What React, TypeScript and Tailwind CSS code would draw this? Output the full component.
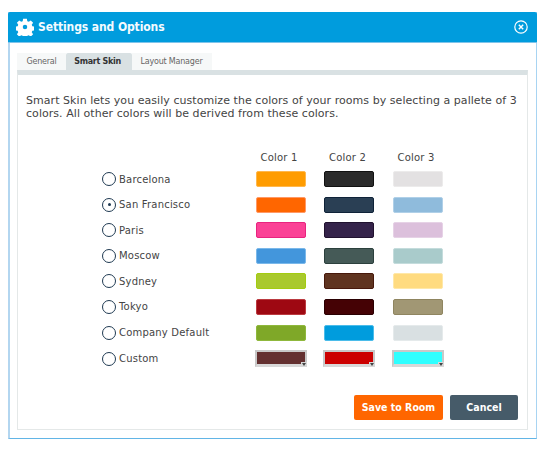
const rows = [
  { name: "Barcelona", colors: [["#ff9c00", "#ffb84d"], ["#2b2b2b", "#111111"], ["#e3e1e2", "#ecebeb"]] },
  { name: "San Francisco", checked: true, colors: [["#ff6600", "#ff9966"], ["#2a3f54", "#0f2238"], ["#8fbbdc", "#b0d0e8"]] },
  { name: "Paris", colors: [["#fb4196", "#e8237f"], ["#35234a", "#21122f"], ["#dcc0dc", "#e6d2e6"]] },
  { name: "Moscow", colors: [["#4396dc", "#7ab8ea"], ["#455a57", "#2c403d"], ["#a9cbcb", "#c4dcdc"]] },
  { name: "Sydney", colors: [["#a9c92d", "#a3cc10"], ["#5f3420", "#47190c"], ["#ffdb80", "#ffe8a8"]] },
  { name: "Tokyo", colors: [["#9e0812", "#bb3a40"], ["#450205", "#2a0002"], ["#a19774", "#8f8560"]] },
  { name: "Company Default", colors: [["#7fa828", "#8fb83c"], ["#009cdd", "#4bbcea"], ["#d9e0e2", "#e5eaeb"]] },
];
const custom = ["#643030", "#cc0000", "#2fffff"];

function Radio({ checked }: { checked?: boolean }) {
  return (
    <span className="flex h-[14px] w-[14px] items-center justify-center rounded-full border-[1.5px] border-[#1f3a52] bg-white">
      {checked && <span className="h-[3px] w-[3px] rounded-full bg-[#1f3a52]" />}
    </span>
  );
}

export default function App() {
  return (
    <div className="h-[450px] w-[545px] bg-white pl-2 pr-2 pt-3 font-['DejaVu_Sans',sans-serif]">
      <div className="flex h-[427px] w-[529px] flex-col border-b border-r border-l-2 border-[#62b5e6] border-l-[#b3d6f0] border-r-[#a8d4f2] bg-white">
        <div className="-ml-[2px] -mr-px flex h-[31px] items-center justify-between rounded-t-[2px] bg-[#009cdd] border-b border-[#7fc4ea] pl-[8px] pr-[9px]">
          <div className="flex items-center gap-[4px]">
            <svg width="18" height="18" viewBox="0 0 24 24" fill="#ffffff">
              <path fillRule="evenodd" d="M9.5 1h5l.6 3.2 1.9.8 2.7-1.8 3.1 3.1-1.8 2.7.8 1.9 3 .6v5l-3 .6-.8 1.9 1.8 2.7-3.1 3.1-2.7-1.8-1.9.8-.6 3h-5l-.6-3-1.9-.8-2.7 1.8-3.1-3.1 1.8-2.7-.8-1.9-3-.6v-5l3-.6.8-1.9-1.8-2.7 3.1-3.1 2.7 1.8 1.9-.8zM12 9a3 3 0 1 0 0 6 3 3 0 0 0 0-6z" />
            </svg>
            <span className="font-['DejaVu_Sans_Condensed','DejaVu_Sans',sans-serif] text-[12px] font-bold tracking-[-0.1px] text-[#f4fbff]">Settings and Options</span>
          </div>
          <svg width="14" height="14" viewBox="0 0 14 14" fill="none" stroke="#ffffff">
            <circle cx="7" cy="7" r="6.2" strokeWidth="1.2" />
            <path d="M4.8 4.8l4.4 4.4M9.2 4.8l-4.4 4.4" strokeWidth="1.4" />
          </svg>
        </div>

        <div className="flex flex-1 flex-col pl-[7px] pr-[8px] pb-2 pt-[10px]">
          <div className="flex h-[17px] items-stretch text-[8px] tracking-[-0.2px] text-[#666666]">
            <div className="flex w-[49px] items-center justify-center bg-[#f6f8f8]">General</div>
            <div className="flex w-[66px] items-center justify-center rounded-t-[2px] bg-[#d9e1e3] pr-[3px] font-bold tracking-[-0.3px] text-[#333333]">Smart Skin</div>
            <div className="flex w-[80px] items-center justify-center bg-[#f6f8f8] pr-[1px]">Layout Manager</div>
          </div>
          <div className="flex flex-1 flex-col border-l border-b border-r border-[#e4e8e8] border-t-[5px] border-t-[#d9e1e3] pl-[8px] pr-[5px]">
            <p className="mt-[19px] text-[11px] leading-[13px] tracking-[0.05px] text-[#444444]">
              Smart Skin lets you easily customize the colors of your rooms by selecting a pallete of 3 colors. All other colors will be derived from these colors.
            </p>
            <div className="ml-[76px] mt-[31px] grid grid-cols-[135px_50px_50px_50px] gap-x-[18.5px] text-[10px] tracking-[0.2px] text-[#444444]">
              <div className="h-[14px]" />
              {["Color 1", "Color 2", "Color 3"].map((c) => (
                <div key={c} className="h-[14px] pr-[3px] text-center leading-[14px]">{c}</div>
              ))}
            </div>
            <div className="ml-[76px] mt-[6px] flex flex-col gap-[9.6px]">
              {rows.map((r) => (
                <div key={r.name} className="grid h-4 grid-cols-[135px_50px_50px_50px] items-center gap-x-[18.5px] text-[10px] tracking-[0.2px] text-[#444444]">
                  <div className="flex items-center gap-[3px]">
                    <Radio checked={r.checked} />
                    <span>{r.name}</span>
                  </div>
                  {r.colors.map(([bg, bd], i) => (
                    <div key={i} className="h-4 rounded-[2px] border" style={{ backgroundColor: bg, borderColor: bd }} />
                  ))}
                </div>
              ))}
              <div className="grid h-4 grid-cols-[135px_50px_50px_50px] items-center gap-x-[18.5px] text-[10px] tracking-[0.2px] text-[#444444]">
                <div className="flex items-center gap-[3px]">
                  <Radio />
                  <span>Custom</span>
                </div>
                {custom.map((c) => (
                  <div key={c} className="relative -mx-px h-[17px] border-[2px] border-[#c8c8c8] border-b-[3px] border-b-[#d8d8d8]" style={{ backgroundColor: c }}>
                    <span className="absolute -bottom-[3px] -right-[2px] h-[5px] w-[6px] bg-[#d8d8d8]">
                      <span className="absolute left-[1px] top-[1px] h-0 w-0 border-x-[2px] border-t-[3px] border-x-transparent border-t-[#444444]" />
                    </span>
                  </div>
                ))}
              </div>
            </div>
            <div className="mt-auto mb-[9px] flex justify-end gap-[7px] pr-[4px]">
              <button className="h-[25px] w-[89px] rounded-[2px] bg-[#ff6600] font-['DejaVu_Sans_Condensed','DejaVu_Sans',sans-serif] text-[10.5px] font-bold text-white">Save to Room</button>
              <button className="h-[25px] w-[68px] rounded-[2px] bg-[#465b69] font-['DejaVu_Sans_Condensed','DejaVu_Sans',sans-serif] text-[10.5px] font-bold text-white">Cancel</button>
            </div>
          </div>
        </div>
      </div>
    </div>
  );
}
